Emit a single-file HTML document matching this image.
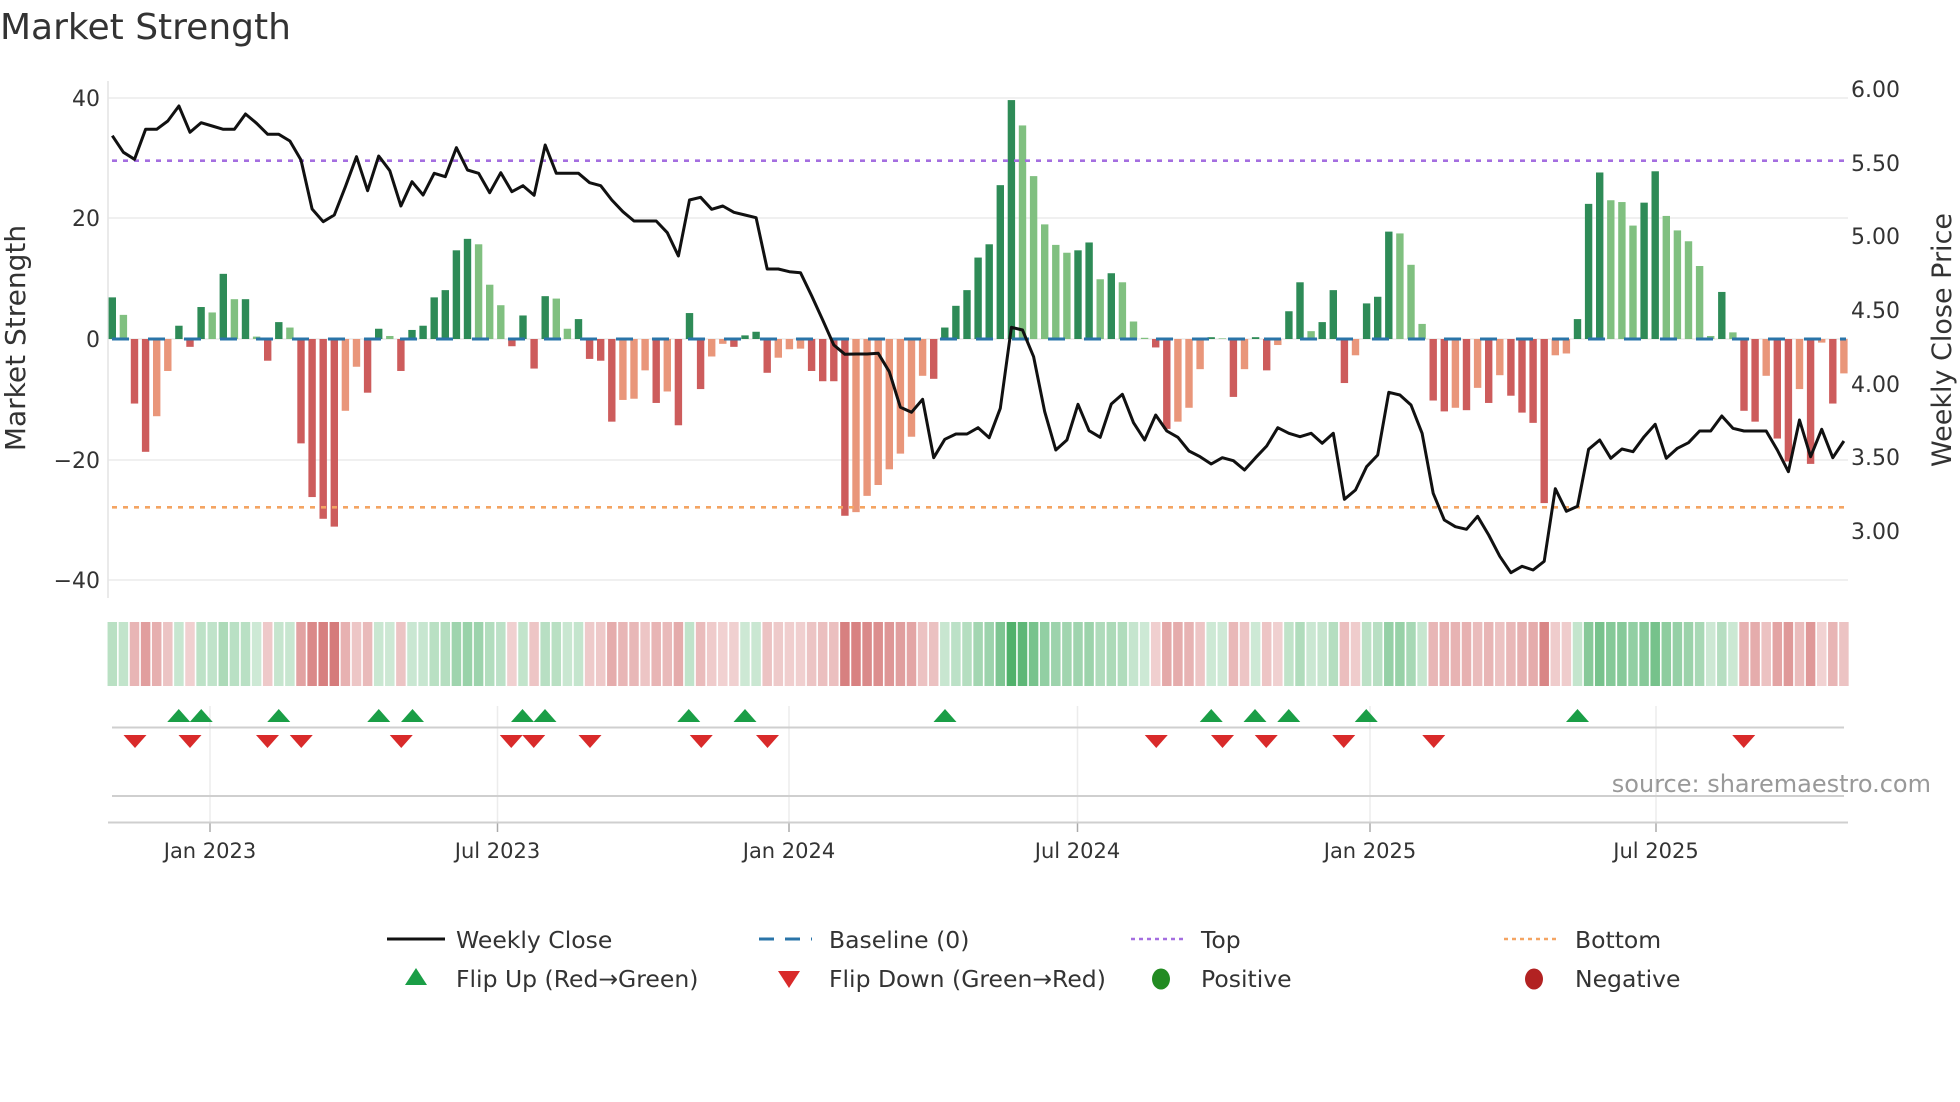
<!DOCTYPE html>
<html><head><meta charset="utf-8"><style>
html,body{margin:0;padding:0;background:#fff;width:1960px;height:1102px;overflow:hidden}
svg{display:block}
text{font-family:"DejaVu Sans","Liberation Sans",sans-serif;fill:#333}
</style></head><body>
<svg id="s" xmlns="http://www.w3.org/2000/svg" width="1960" height="1102" viewBox="0 0 1960 1102">
<text x="0" y="39" font-size="36">Market Strength</text>
<g id="grid"></g>
<line x1="108" y1="81" x2="108" y2="598" stroke="#e4e4e4" stroke-width="1.5"/>
<g font-size="22" text-anchor="end">
<text x="100" y="106">40</text><text x="100" y="226">20</text><text x="100" y="347">0</text><text x="100" y="468">−20</text><text x="100" y="588">−40</text>
</g>
<g font-size="22">
<text x="1851" y="97">6.00</text><text x="1851" y="171">5.50</text><text x="1851" y="244">5.00</text><text x="1851" y="318">4.50</text><text x="1851" y="392">4.00</text><text x="1851" y="465">3.50</text><text x="1851" y="539">3.00</text>
</g>
<text font-size="28" text-anchor="middle" transform="translate(25,338) rotate(-90)">Market Strength</text>
<text font-size="27" text-anchor="middle" transform="translate(1951,340) rotate(-90)">Weekly Close Price</text>
<g id="bars"></g>
<line x1="112" y1="160.7" x2="1846" y2="160.7" stroke="#a46ee0" stroke-width="2.6" stroke-dasharray="5 6"/>
<line x1="112" y1="507.3" x2="1846" y2="507.3" stroke="#f4a462" stroke-width="2.6" stroke-dasharray="5 6"/>
<line x1="112" y1="339" x2="1846" y2="339" stroke="#2a74a8" stroke-width="3" stroke-dasharray="17 19"/>
<polyline id="price" fill="none" stroke="#111" stroke-width="3" stroke-linejoin="round"/>
<g id="heat"></g>
<g id="vgrid"></g>
<line x1="112" y1="727.5" x2="1844" y2="727.5" stroke="#cfcfcf" stroke-width="2"/>
<line x1="112" y1="796" x2="1844" y2="796" stroke="#cfcfcf" stroke-width="2"/>
<line x1="108" y1="822.5" x2="1848" y2="822.5" stroke="#cfcfcf" stroke-width="2"/>
<g id="tri"></g>
<g font-size="21" text-anchor="middle">
<text x="210" y="858">Jan 2023</text><text x="497.5" y="858">Jul 2023</text><text x="789" y="858">Jan 2024</text><text x="1077.5" y="858">Jul 2024</text><text x="1370" y="858">Jan 2025</text><text x="1656" y="858">Jul 2025</text>
</g>
<text x="1931" y="792" font-size="24" text-anchor="end" style="fill:#999">source: sharemaestro.com</text>
<g font-size="23.5">
<line x1="387" y1="939" x2="445" y2="939" stroke="#111" stroke-width="3"/>
<text x="456" y="948">Weekly Close</text>
<line x1="759" y1="939" x2="812" y2="939" stroke="#2a74a8" stroke-width="3" stroke-dasharray="15 11"/>
<text x="829" y="948">Baseline (0)</text>
<line x1="1131" y1="939" x2="1185" y2="939" stroke="#a46ee0" stroke-width="2.6" stroke-dasharray="4 4"/>
<text x="1201" y="948">Top</text>
<line x1="1504" y1="939" x2="1559" y2="939" stroke="#f4a462" stroke-width="2.6" stroke-dasharray="4 4"/>
<text x="1575" y="948">Bottom</text>
<polygon points="405,985 427,985 416,968" fill="#1a9e46"/>
<text x="456" y="987">Flip Up (Red→Green)</text>
<polygon points="778,971 800,971 789,988" fill="#d92a2a"/>
<text x="829" y="987">Flip Down (Green→Red)</text>
<ellipse cx="1161" cy="979" rx="9" ry="10.5" fill="#228b22"/>
<text x="1201" y="987">Positive</text>
<ellipse cx="1534" cy="979" rx="9" ry="10.5" fill="#b22222"/>
<text x="1575" y="987">Negative</text>
</g>
</svg>
<script>
var NS="http://www.w3.org/2000/svg";
function el(p,t,a){var e=document.createElementNS(NS,t);for(var k in a)e.setAttribute(k,a[k]);document.getElementById(p).appendChild(e);return e;}
[98,218,339,460,580].forEach(function(y){el("grid","line",{x1:108,x2:1848,y1:y,y2:y,stroke:"#ececec","stroke-width":1.5});});
var v=[6.9,4,-10.7,-18.7,-12.8,-5.3,2.2,-1.3,5.3,4.4,10.8,6.6,6.6,0.4,-3.6,2.8,1.9,-17.3,-26.2,-29.8,-31.1,-11.9,-4.6,-8.9,1.7,0.5,-5.3,1.5,2.2,6.9,8.1,14.7,16.6,15.7,9,5.6,-1.2,3.9,-4.9,7.1,6.7,1.7,
3.3,-3.3,-3.6,-13.7,-10.1,-9.9,-5.2,-10.6,-8.7,-14.3,4.3,-8.3,-2.9,-0.8,-1.3,0.6,1.2,-5.6,-3.1,-1.7,-1.6,-5.3,-7,-7,-29.3,-28.7,-26,-24.2,-21.6,-19,-16.2,-6.1,-6.6,1.9,5.5,8.1,13.5,15.7,25.5,39.6,
35.4,27,19,15.6,14.3,14.7,16,9.9,10.9,9.4,2.9,0.2,-1.4,-14.9,-13.7,-11.4,-5,0.3,0.1,-9.6,-5,0.3,-5.2,-1,4.6,9.4,1.3,2.8,8.1,-7.3,-2.7,5.9,7,17.8,17.5,12.3,2.5,-10.2,-12,-11.4,-11.8,
-8.1,-10.6,-6,-9.4,-12.2,-13.9,-27.2,-2.7,-2.4,3.3,22.4,27.6,23,22.7,18.8,22.6,27.8,20.4,18,16.2,12.1,0.5,7.8,1.1,-11.9,-13.7,-6.1,-16.5,-20.3,-8.3,-20.7,-0.6,-10.7,-5.7];
var p=[137,187,208,118,118,93,48,127,98,108,118,118,72,100,133,133,153,210,357,395,375,290,200,302,198,242,348,275,315,250,260,173,240,250,308,248,305,287,316,165,250,250,
250,278,287,330,365,393,393,393,428,498,330,322,358,348,367,375,383,537,537,545,548,617,690,765,793,792,792,790,845,952,967,928,1103,1048,1032,1032,1013,1043,955,712,
720,800,965,1080,1050,943,1022,1042,942,913,998,1050,975,1023,1042,1083,1100,1122,1103,1112,1140,1103,1068,1013,1030,1040,1030,1060,1030,1228,1200,1130,1095,907,915,945,1030,1210,1290,1310,1318,
1279,1335,1399,1448,1429,1440,1414,1196,1264,1249,
1078,1050,1105,1077,1085,1040,1003,1105,1075,1058,1023,1023,978,1015,1023,1023,1023,1080,1145,990,1100,1018,1103,1053];
var sp=11.1,x0=112.3,pts=[];
for(var i=0;i<v.length;i++){
 var x=x0+i*sp,val=v[i],prev=i?v[i-1]:0,c;
 if(val>=0)c=(val>=prev)?"#2e8b57":"#80c080";else c=(val<=prev)?"#cd5c5c":"#e9967a";
 var y=339-val*6.033;
 el("bars","rect",{x:x-3.7,width:7.4,y:Math.min(y,339),height:Math.max(Math.abs(339-y),0.6),fill:c});
 var a=0.25+0.65*Math.min(Math.abs(val)/40,1);
 var hc=val>=0?"rgba(60,168,90,"+a+")":"rgba(200,80,80,"+a+")";
 el("heat","rect",{x:x-sp/2+0.8,width:sp-1.6,y:622,height:64,fill:hc});
 if(i<p.length)pts.push(x.toFixed(1)+","+(90+p[i]/3).toFixed(1));
}
document.getElementById("price").setAttribute("points",pts.join(" "));
[210,497.5,789,1077.5,1370,1656].forEach(function(x){
 el("vgrid","line",{x1:x,x2:x,y1:706,y2:822,stroke:"#ececec","stroke-width":1.5});
 el("vgrid","line",{x1:x,x2:x,y1:822,y2:832,stroke:"#aaa","stroke-width":1.5});
});
[143,161,223,303,330,418,436,551,596,756,969,1004,1031,1093,1262].forEach(function(vx){var x=vx*1.25;
 el("tri","polygon",{points:(x-11.5)+",722 "+(x+11.5)+",722 "+x+",709",fill:"#1a9e46"});});
[108,152,214,241,321,409,427,472,561,614,925,978,1013,1075,1147,1395].forEach(function(vx){var x=vx*1.25;
 el("tri","polygon",{points:(x-11.5)+",735 "+(x+11.5)+",735 "+x+",748",fill:"#d92a2a"});});
</script>
</body></html>
